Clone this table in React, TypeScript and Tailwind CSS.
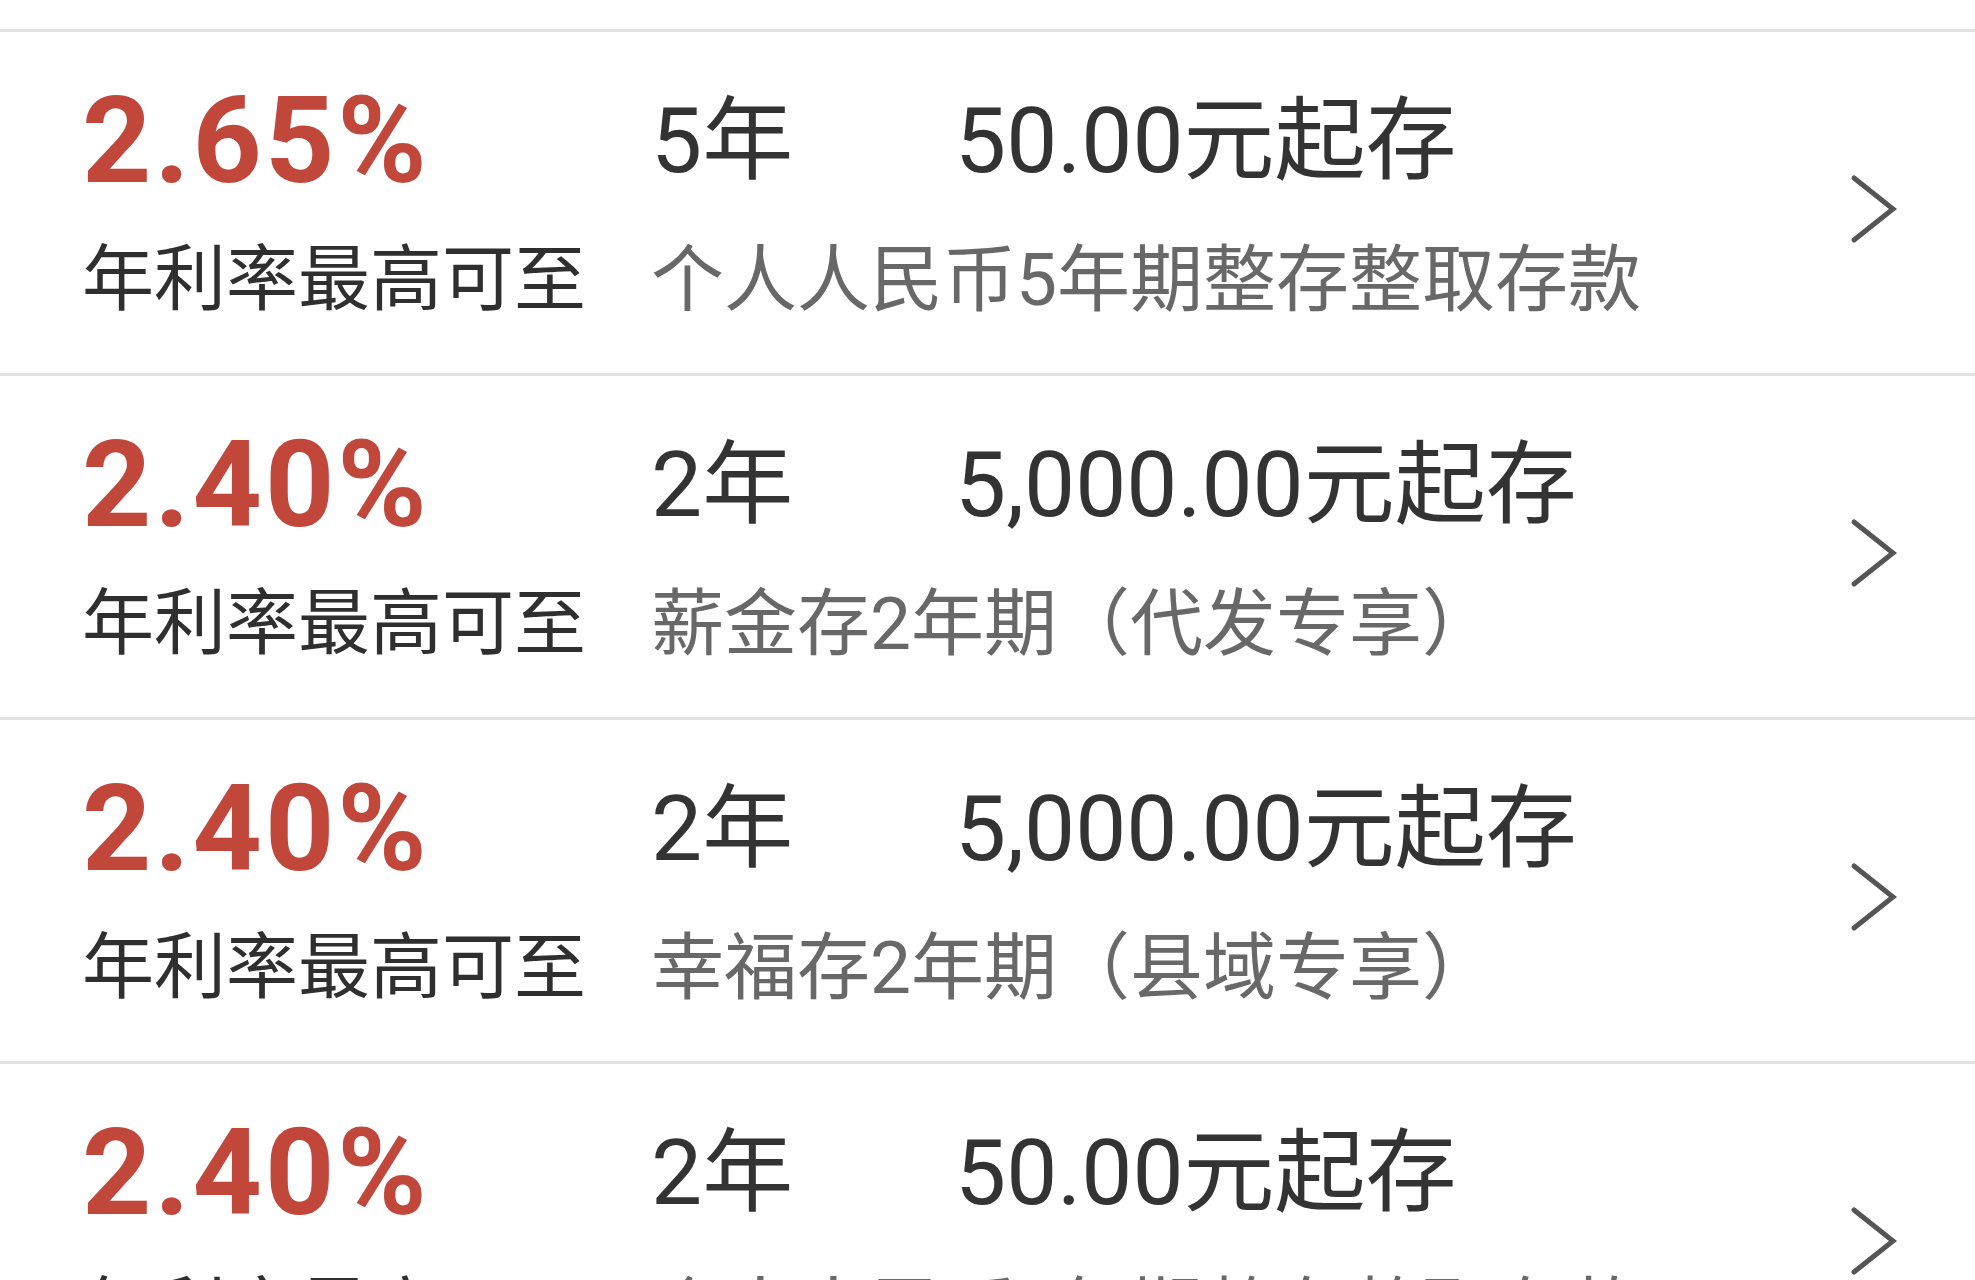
import React from "react";

type Product = {
  rate: string;
  term: string;
  amount: string;
  name: string;
};

const PRODUCTS: Product[] = [
  { rate: "2.65%", term: "5年", amount: "50.00元起存", name: "个人人民币5年期整存整取存款" },
  { rate: "2.40%", term: "2年", amount: "5,000.00元起存", name: "薪金存2年期（代发专享）" },
  { rate: "2.40%", term: "2年", amount: "5,000.00元起存", name: "幸福存2年期（县域专享）" },
  { rate: "2.40%", term: "2年", amount: "50.00元起存", name: "个人人民币2年期整存整取存款" },
];

const FONT = "font-['Roboto','Noto_Sans_CJK_SC',sans-serif]";

function Chevron() {
  return (
    <svg width="50" height="70" viewBox="0 0 50 70" className="shrink-0 mt-[12px]">
      <polyline
        points="5,4 44,35 5,66"
        fill="none"
        stroke="#555555"
        strokeWidth="5"
        strokeLinecap="round"
        strokeLinejoin="miter"
      />
    </svg>
  );
}

function ProductRow({ p }: { p: Product }) {
  return (
    <div className="h-[344px] border-t-[3px] border-[#e2e2e2] flex items-center pl-[82px] pr-[76px]">
      <div className="flex-1 self-start pt-[49px]">
        {/* rate / term / amount */}
        <div className="flex items-start">
          <div className="w-[569px] text-[121px] leading-[121px] font-bold text-[#c2473b] tracking-[3px]">
            {p.rate}
          </div>
          <div className="w-[304px] mt-[15px] text-[91px] leading-[91px] text-[#333333]">{p.term}</div>
          <div className="mt-[15px] text-[91px] leading-[91px] text-[#333333]">{p.amount}</div>
        </div>
        {/* label / product name */}
        <div className="flex mt-[42px] text-[72px] leading-[72px]">
          <div className="w-[569px] text-[#2f2f2f]">年利率最高可至</div>
          <div className="text-[#686868] text-[73px] whitespace-nowrap">{p.name}</div>
        </div>
      </div>
      <Chevron />
    </div>
  );
}

export default function App() {
  return (
    <div className={`w-full h-screen overflow-hidden bg-white ${FONT}`}>
      <div className="h-[29px]" />
      {PRODUCTS.map((p, i) => (
        <ProductRow key={i} p={p} />
      ))}
    </div>
  );
}
